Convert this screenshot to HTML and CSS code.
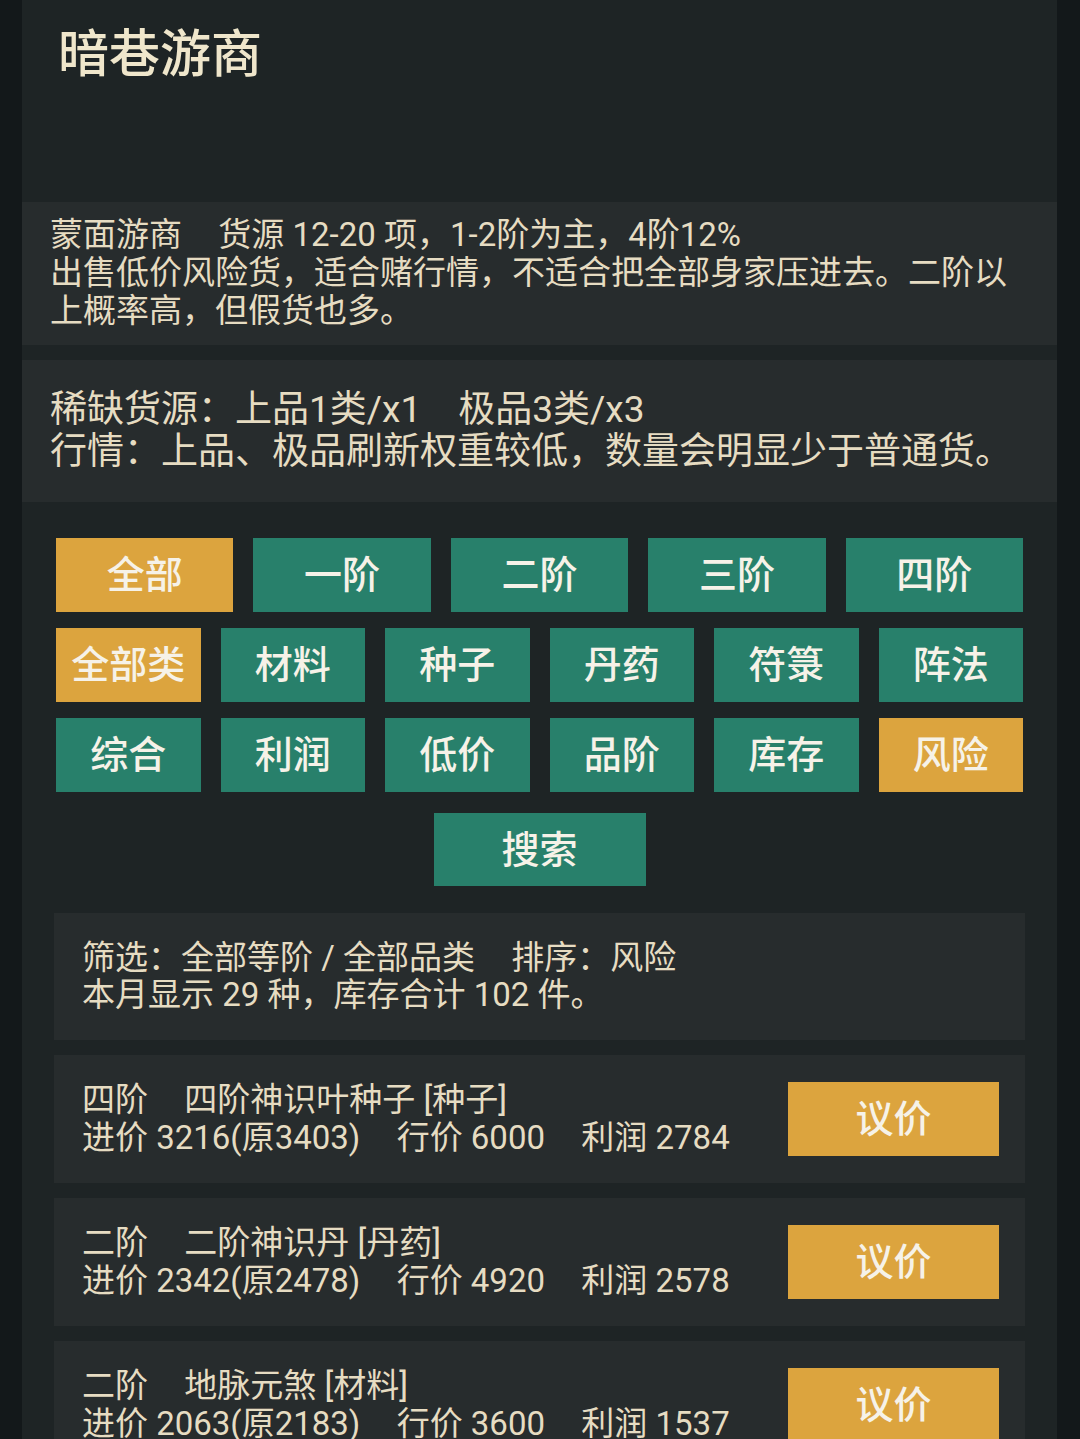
FILE: index.html
```html
<!DOCTYPE html>
<html lang="zh-CN">
<head>
<meta charset="utf-8">
<title>暗巷游商</title>
<link rel="stylesheet" href="styles.css">
</head>
<body>
<div class="panel">
  <header class="header">
    <h1 class="title">暗巷游商</h1>
  </header>

  <section class="info info-merchant">
    <div>蒙面游商<span class="g"></span>货源 12-20 项，1-2阶为主，4阶12%</div>
    <div>出售低价风险货，适合赌行情，不适合把全部身家压进去。二阶以上概率高，但假货也多。</div>
  </section>

  <section class="info info-market">
    <div>稀缺货源：上品1类/x1<span class="g"></span>极品3类/x3</div>
    <div>行情：上品、极品刷新权重较低，数量会明显少于普通货。</div>
  </section>

  <div class="controls">
    <div class="btn-row cols-5">
      <button class="btn active">全部</button>
      <button class="btn">一阶</button>
      <button class="btn">二阶</button>
      <button class="btn">三阶</button>
      <button class="btn">四阶</button>
    </div>
    <div class="btn-row cols-6">
      <button class="btn active">全部类</button>
      <button class="btn">材料</button>
      <button class="btn">种子</button>
      <button class="btn">丹药</button>
      <button class="btn">符箓</button>
      <button class="btn">阵法</button>
    </div>
    <div class="btn-row cols-6">
      <button class="btn">综合</button>
      <button class="btn">利润</button>
      <button class="btn">低价</button>
      <button class="btn">品阶</button>
      <button class="btn">库存</button>
      <button class="btn active">风险</button>
    </div>
    <div class="search-row">
      <button class="btn search">搜索</button>
    </div>
  </div>

  <div class="list">
    <div class="card summary">
      <div>筛选：全部等阶 / 全部品类<span class="g"></span>排序：风险</div>
      <div>本月显示 29 种，库存合计 102 件。</div>
    </div>

    <div class="card item">
      <div class="item-text">
        <div>四阶<span class="g"></span>四阶神识叶种子 [种子]</div>
        <div>进价 3216(原3403)<span class="g"></span>行价 6000<span class="g"></span>利润 2784</div>
      </div>
      <button class="btn deal">议价</button>
    </div>

    <div class="card item">
      <div class="item-text">
        <div>二阶<span class="g"></span>二阶神识丹 [丹药]</div>
        <div>进价 2342(原2478)<span class="g"></span>行价 4920<span class="g"></span>利润 2578</div>
      </div>
      <button class="btn deal">议价</button>
    </div>

    <div class="card item">
      <div class="item-text">
        <div>二阶<span class="g"></span>地脉元煞 [材料]</div>
        <div>进价 2063(原2183)<span class="g"></span>行价 3600<span class="g"></span>利润 1537</div>
      </div>
      <button class="btn deal">议价</button>
    </div>
  </div>
</div>
</body>
</html>
```

FILE: styles.css
```css
* {
  box-sizing: border-box;
}

html, body {
  margin: 0;
  padding: 0;
  background: #13181a;
}

body {
  font-family: Roboto, "Noto Sans CJK SC", "Noto Sans", sans-serif;
  color: #e6dcc2;
}

.panel {
  margin-left: 22px;
  width: 1035px;
  min-height: 1600px;
  background: #1e2425;
  padding-bottom: 40px;
}

.header {
  height: 202px;
  padding: 25px 36px 0;
}

.title {
  margin: 0;
  font-size: 51px;
  line-height: 60px;
  font-weight: 500;
  color: #efe6cb;
}

.info {
  background: #272c2d;
  padding-left: 28px;
  padding-right: 20px;
}

.info-merchant {
  font-size: 33px;
  line-height: 38px;
  padding-top: 14px;
  padding-bottom: 15px;
}

.info-market {
  margin-top: 15px;
  font-size: 37px;
  line-height: 42px;
  padding-top: 29px;
  padding-bottom: 29px;
}

.g {
  display: inline-block;
  width: 1.1em;
}

.info-market .g {
  width: 1em;
}

.controls {
  padding: 36px 34px 0;
}

.btn-row {
  display: grid;
  gap: 20px;
  margin-bottom: 16px;
}

.cols-5 {
  grid-template-columns: repeat(5, 1fr);
}

.cols-6 {
  grid-template-columns: repeat(6, 1fr);
}

.btn {
  height: 74px;
  border: 0;
  margin: 0;
  padding: 0;
  background: #28806b;
  color: #f6f2e8;
  font-family: Roboto, "Noto Sans CJK SC", sans-serif;
  font-size: 38px;
  font-weight: 500;
  line-height: 74px;
  text-align: center;
}

.btn.active {
  background: #dca43e;
}

.search-row {
  display: flex;
  justify-content: center;
  padding-top: 5px;
}

.search {
  width: 212px;
  height: 73px;
}

.list {
  padding: 27px 32px 0;
}

.card {
  background: #272c2d;
  font-size: 33px;
}

.summary {
  line-height: 37px;
  padding: 26px 28px 27px;
}

.item {
  margin-top: 15px;
  height: 128px;
  padding: 0 26px 0 28px;
  display: flex;
  align-items: center;
  justify-content: space-between;
  line-height: 38px;
}

.deal {
  width: 211px;
  height: 74px;
  background: #dca43e;
}
```
